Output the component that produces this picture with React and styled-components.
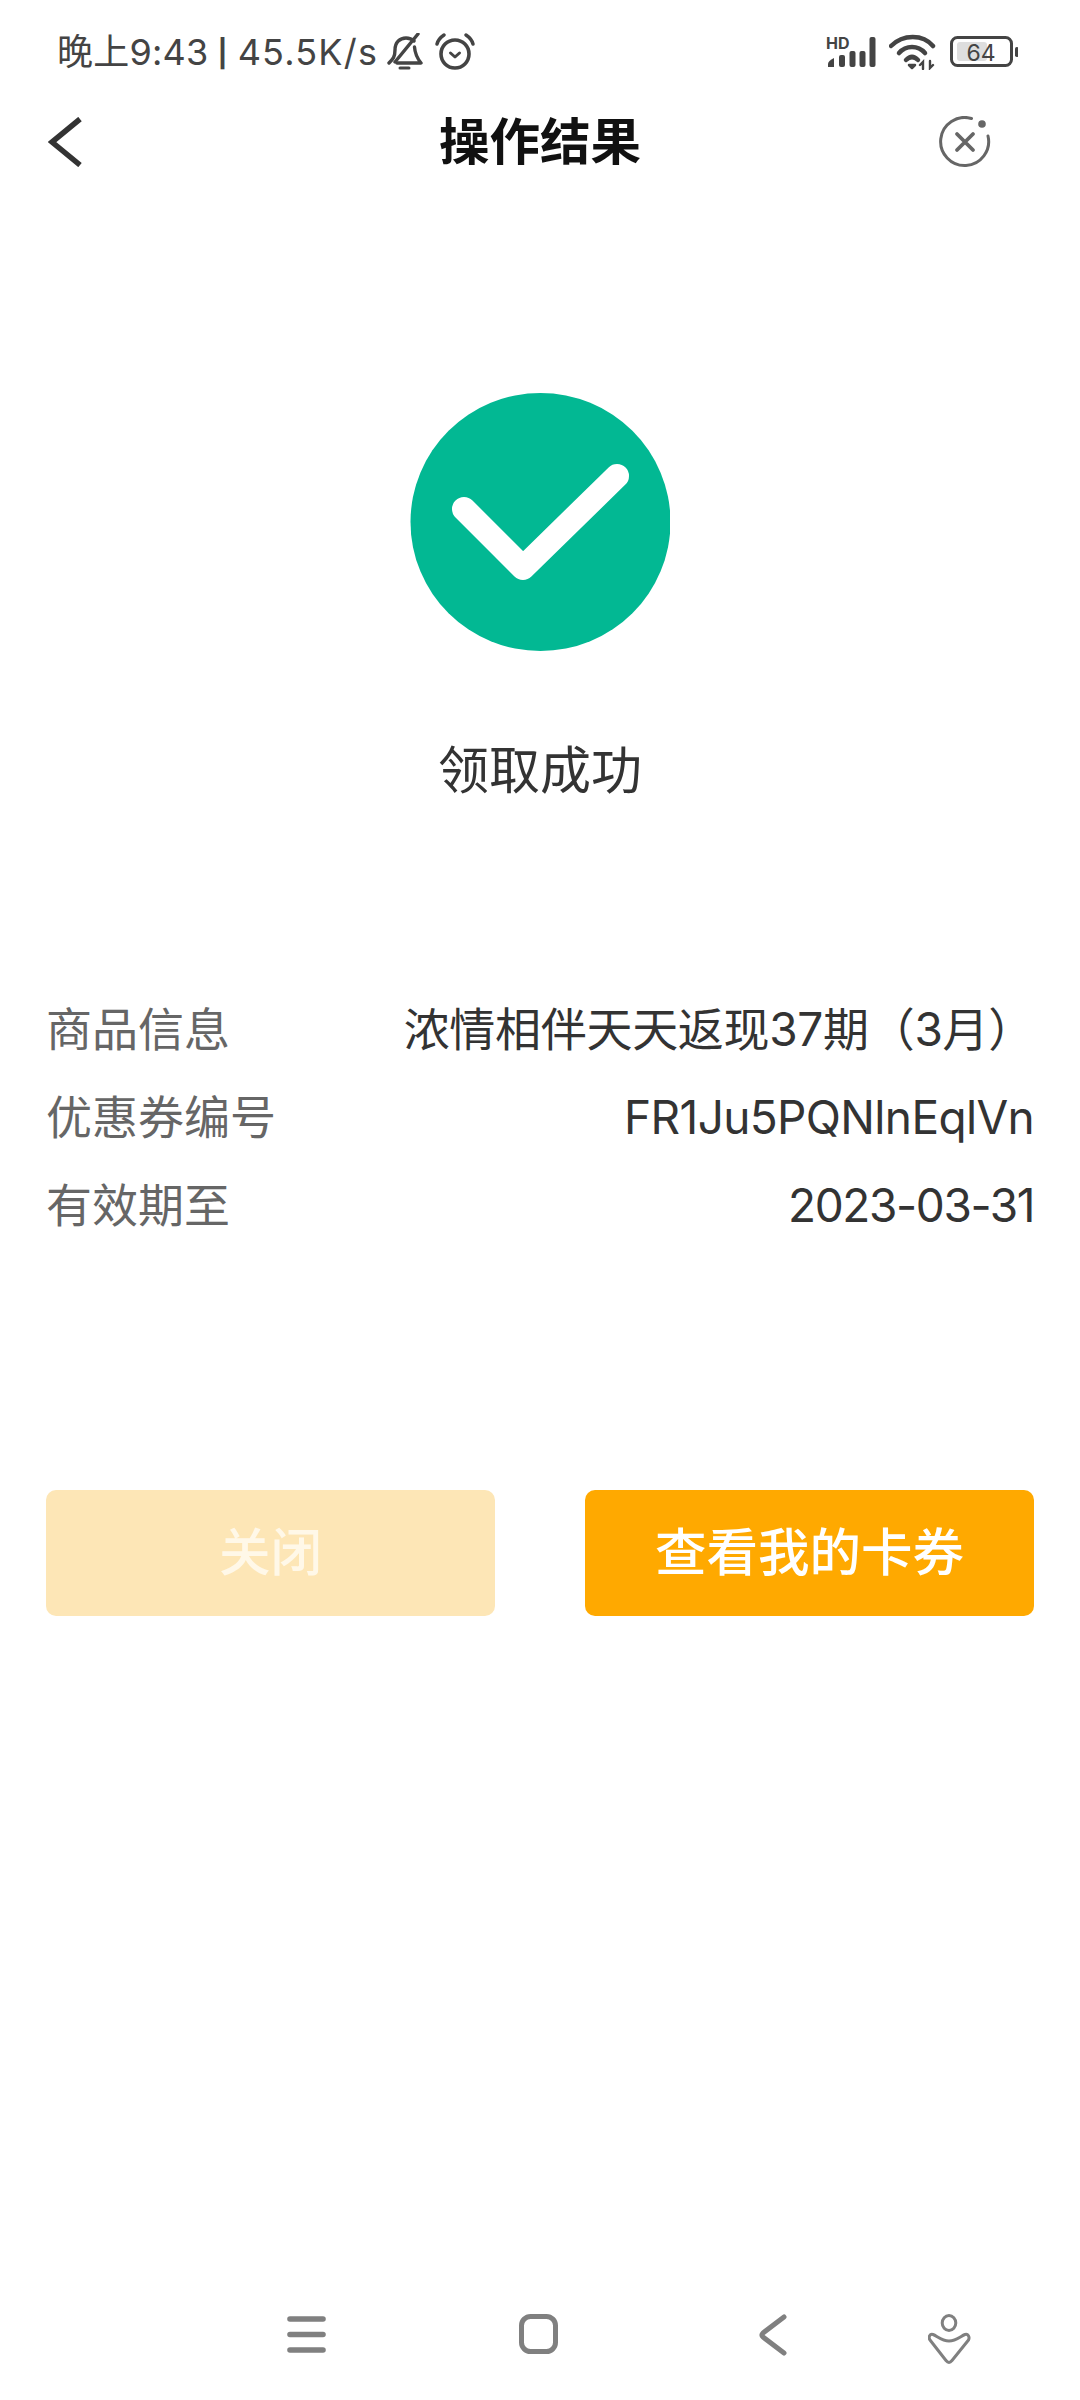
import React from "react";
import styled, { createGlobalStyle } from "styled-components";

const Global = createGlobalStyle`
  html, body { margin: 0; padding: 0; background: #fff; }
  body { font-family: Inter, "Noto Sans CJK SC", sans-serif; }
`;

const Page = styled.div`
  width: 1080px;
  height: 2400px;
  background: #fff;
  display: flex;
  flex-direction: column;
  overflow: hidden;
`;

const StatusBar = styled.div`
  height: 104px;
  box-sizing: border-box;
  padding: 33px 62px 0 57px;
  display: flex;
  align-items: flex-start;
  color: #444;
`;

const StatusText = styled.span`
  font-family: Inter, "Noto Sans CJK SC", sans-serif;
  font-size: 36px;
  line-height: 38px;
  white-space: nowrap;
  letter-spacing: 0.2px;
`;

const Pipe = styled.span`
  font-size: 27px;
  font-weight: 700;
  margin: 0 10px 0 9px;
  position: relative;
  top: -2px;
`;

const Speed = styled.span`
  letter-spacing: 1.2px;
`;

const StatusGroup = styled.div`
  display: flex;
  align-items: center;
  gap: ${(p) => p.$gap}px;
  margin-left: ${(p) => p.$left || "0"};
  height: 38px;
`;

const NavBar = styled.header`
  height: 76px;
  padding: 0 48px;
  display: grid;
  grid-template-columns: 1fr auto 1fr;
  align-items: center;
  justify-items: start;
`;

const NavEnd = styled.div`
  justify-self: end;
  margin-right: 41px;
`;

const Title = styled.h1`
  margin: 0 0 8px;
  font-family: "Noto Sans CJK SC", sans-serif;
  font-size: 50.500px;
  font-weight: 700;
  line-height: 68px;
  color: #111;
`;

const Hero = styled.section`
  margin-top: 213px;
  display: flex;
  flex-direction: column;
  align-items: center;
`;

const ResultText = styled.div`
  margin-top: 82px;
  font-family: "Noto Sans CJK SC", sans-serif;
  font-size: 51px;
  line-height: 64px;
  color: #333;
`;

const Info = styled.dl`
  margin: 197px 46px 0;
  display: flex;
  flex-direction: column;
  gap: 28px;
`;

const Row = styled.div`
  display: flex;
  justify-content: space-between;
  align-items: center;
  height: 60px;
`;

const Label = styled.dt`
  font-family: "Noto Sans CJK SC", sans-serif;
  font-size: 46px;
  line-height: 60px;
  color: #666;
`;

const Value = styled.dd`
  margin: 0;
  padding-top: 6px;
  font-family: Inter, "Noto Sans CJK SC", sans-serif;
  font-size: 46px;
  line-height: 60px;
  color: #333;
  letter-spacing: ${(p) => p.$track}px;
`;

const Actions = styled.div`
  margin: 258px 46px 0;
  display: flex;
  justify-content: space-between;
`;

const Button = styled.button`
  width: 449px;
  height: 126px;
  border: 0;
  padding: 0 0 10px;
  border-radius: 10px;
  background: ${(p) => (p.$muted ? "#fde6b6" : "#ffa900")};
  color: ${(p) => (p.$muted ? "#fff8e8" : "#fff")};
  font-family: "Noto Sans CJK SC", sans-serif;
  font-size: 51.500px;
  font-weight: 500;
`;

const BottomNav = styled.nav`
  margin-top: auto;
  height: 86px;
  padding-left: 284px;
  display: flex;
  align-items: flex-start;
`;

const NavSlot = styled.span`
  display: block;
  width: ${(p) => p.$w}px;
  height: 50px;
  flex: none;
`;

const Svg = styled.svg`
  display: block;
`;

const BellOff = () => (
  <Svg width="36" height="38" viewBox="0 0 36 38" fill="none" stroke="#444" strokeWidth="3.4" strokeLinecap="round" strokeLinejoin="round">
    <path d="M2 30 C6 26 8 24 8 17 C8 9 13 5 19 5 C22 5 25 6 27 8" />
    <path d="M27.5 14 C28 21 30 25 34 30 H10" />
    <path d="M31 1 L8 29" />
    <path d="M13 35 H22" strokeWidth="3" />
  </Svg>
);

const Alarm = () => (
  <Svg width="40" height="38" viewBox="0 0 40 38" fill="none" stroke="#444" strokeLinecap="round" strokeLinejoin="round">
    <circle cx="20" cy="21" r="14" strokeWidth="3.6" />
    <path d="M15.5 20 L20 24 L24.500 20" strokeWidth="3" />
    <path d="M2 11 C3 7 6 4 9 2 M38 11 C37 7 34 4 31 2" strokeWidth="3.4" />
  </Svg>
);

const Signal = () => (
  <Svg width="50" height="40" viewBox="0 -4 50 40">
    <text x="0" y="13" fontFamily="Inter, sans-serif" fontSize="16" fontWeight="700" fill="#444">HD</text>
    <g fill="#444">
      <path d="M2 31 V28 Q2 25 8 22 V31 Z" />
      <rect x="13" y="19" width="6" height="12" rx="2" />
      <rect x="23.500" y="15" width="6" height="16" rx="2" />
      <rect x="33.500" y="15" width="6" height="16" rx="2" />
      <rect x="43.500" y="1" width="6" height="30" rx="2" />
    </g>
  </Svg>
);

const Wifi = () => (
  <Svg width="48" height="36" viewBox="0 0 48 36" fill="none" stroke="#444" strokeLinecap="round">
    <path d="M2 12 C14 0 34 0 44 12" strokeWidth="4.500" />
    <path d="M10 19 C17 11 29 11 36 19" strokeWidth="4.500" />
    <path d="M17 26 C21 22 25 22 29 26" strokeWidth="4.500" />
    <path d="M20 31 L23 34 L26 31 Z" fill="#444" strokeWidth="2.500" strokeLinejoin="round" />
    <path d="M34 35 V28 L31 31 M41 27 V34 L44 31" strokeWidth="2.400" />
  </Svg>
);

const Battery = () => (
  <Svg width="68" height="32" viewBox="0 0 68 32">
    <rect x="1.500" y="1.500" width="60" height="28" rx="6" fill="none" stroke="#444" strokeWidth="3" />
    <rect x="7" y="6" width="30" height="19" rx="3" fill="#dedede" />
    <text x="31" y="24.500" textAnchor="middle" fontFamily="Inter, sans-serif" fontSize="23" fill="#444">64</text>
    <rect x="65" y="11" width="3.500" height="10" rx="1.700" fill="#444" />
  </Svg>
);

const Back = () => (
  <Svg width="34" height="50" viewBox="0 0 34 50" fill="none" stroke="#333" strokeWidth="5.500">
    <path d="M32 2 L4 25 L32 48" strokeLinejoin="miter" />
  </Svg>
);

const CloseMini = () => (
  <Svg width="52" height="52" viewBox="0 0 52 52" fill="none" stroke="#666" strokeLinecap="round">
    <path d="M32.5 2.500 A24 24 0 1 0 49 20" strokeWidth="3" />
    <path d="M18 18 L34 34 M34 18 L18 34" strokeWidth="3.800" />
    <circle cx="43" cy="8" r="3.800" fill="#666" stroke="none" />
  </Svg>
);

const Success = () => (
  <Svg width="260" height="260" viewBox="0 0 260 260">
    <ellipse cx="130.500" cy="129" rx="130" ry="129" fill="#02b893" />
    <path d="M54 116 L113 175 L207 83" fill="none" stroke="#fff" strokeWidth="24" strokeLinecap="round" strokeLinejoin="round" />
  </Svg>
);

const Menu = () => (
  <Svg width="44" height="50" viewBox="0 0 44 50" stroke="#808080" strokeWidth="5.600" strokeLinecap="round">
    <path d="M6 5 H39 M6 20.500 H39 M6 36 H39" />
  </Svg>
);

const Home = () => (
  <Svg width="44" height="50" viewBox="0 0 44 50" fill="none" stroke="#808080" strokeWidth="5">
    <rect x="5.500" y="2.500" width="34" height="35" rx="9" />
  </Svg>
);

const NavBack = () => (
  <Svg width="32" height="50" viewBox="0 0 32 50" fill="none" stroke="#808080" strokeWidth="5" strokeLinecap="round" strokeLinejoin="round">
    <path d="M26 3 L5 19 Q3 21 5 23 L26 39" />
  </Svg>
);

const Assistant = () => (
  <Svg width="44" height="50" viewBox="0 -3 44 50" fill="none" stroke="#808080" strokeWidth="3" strokeLinejoin="round">
    <ellipse cx="21" cy="6" rx="6.800" ry="7.500" />
    <path d="M5 17.500 C9 19 14 24 21 24 C28 24 33 19 37 17.500 C40 16.500 42 20 40.500 23 L24 43.500 C22 46 20 46 18 43.500 L2 23 C0 20 2 16.500 5 17.500 Z" />
  </Svg>
);

const rows = [
  ["商品信息", "浓情相伴天天返现37期（3月）", -0.3],
  ["优惠券编号", "FR1Ju5PQNlnEqlVn", -0.65],
  ["有效期至", "2023-03-31", -1.4],
];

export default function App() {
  return (
    <Page>
      <Global />
      <StatusBar>
        <StatusText>晚上9:43<Pipe>|</Pipe><Speed>45.5K/s</Speed></StatusText>
        <StatusGroup $gap={12} $left="9px">
          <BellOff />
          <Alarm />
        </StatusGroup>
        <StatusGroup $gap={13} $left="auto">
          <Signal />
          <Wifi />
          <Battery />
        </StatusGroup>
      </StatusBar>
      <NavBar>
        <Back />
        <Title>操作结果</Title>
        <NavEnd><CloseMini /></NavEnd>
      </NavBar>
      <Hero>
        <Success />
        <ResultText>领取成功</ResultText>
      </Hero>
      <Info>
        {rows.map(([k, v, t]) => (
          <Row key={k}>
            <Label>{k}</Label>
            <Value $track={t}>{v}</Value>
          </Row>
        ))}
      </Info>
      <Actions>
        <Button $muted>关闭</Button>
        <Button>查看我的卡券</Button>
      </Actions>
      <BottomNav>
        <NavSlot $w={232}><Menu /></NavSlot>
        <NavSlot $w={242}><Home /></NavSlot>
        <NavSlot $w={170}><NavBack /></NavSlot>
        <NavSlot $w={44}><Assistant /></NavSlot>
      </BottomNav>
    </Page>
  );
}
